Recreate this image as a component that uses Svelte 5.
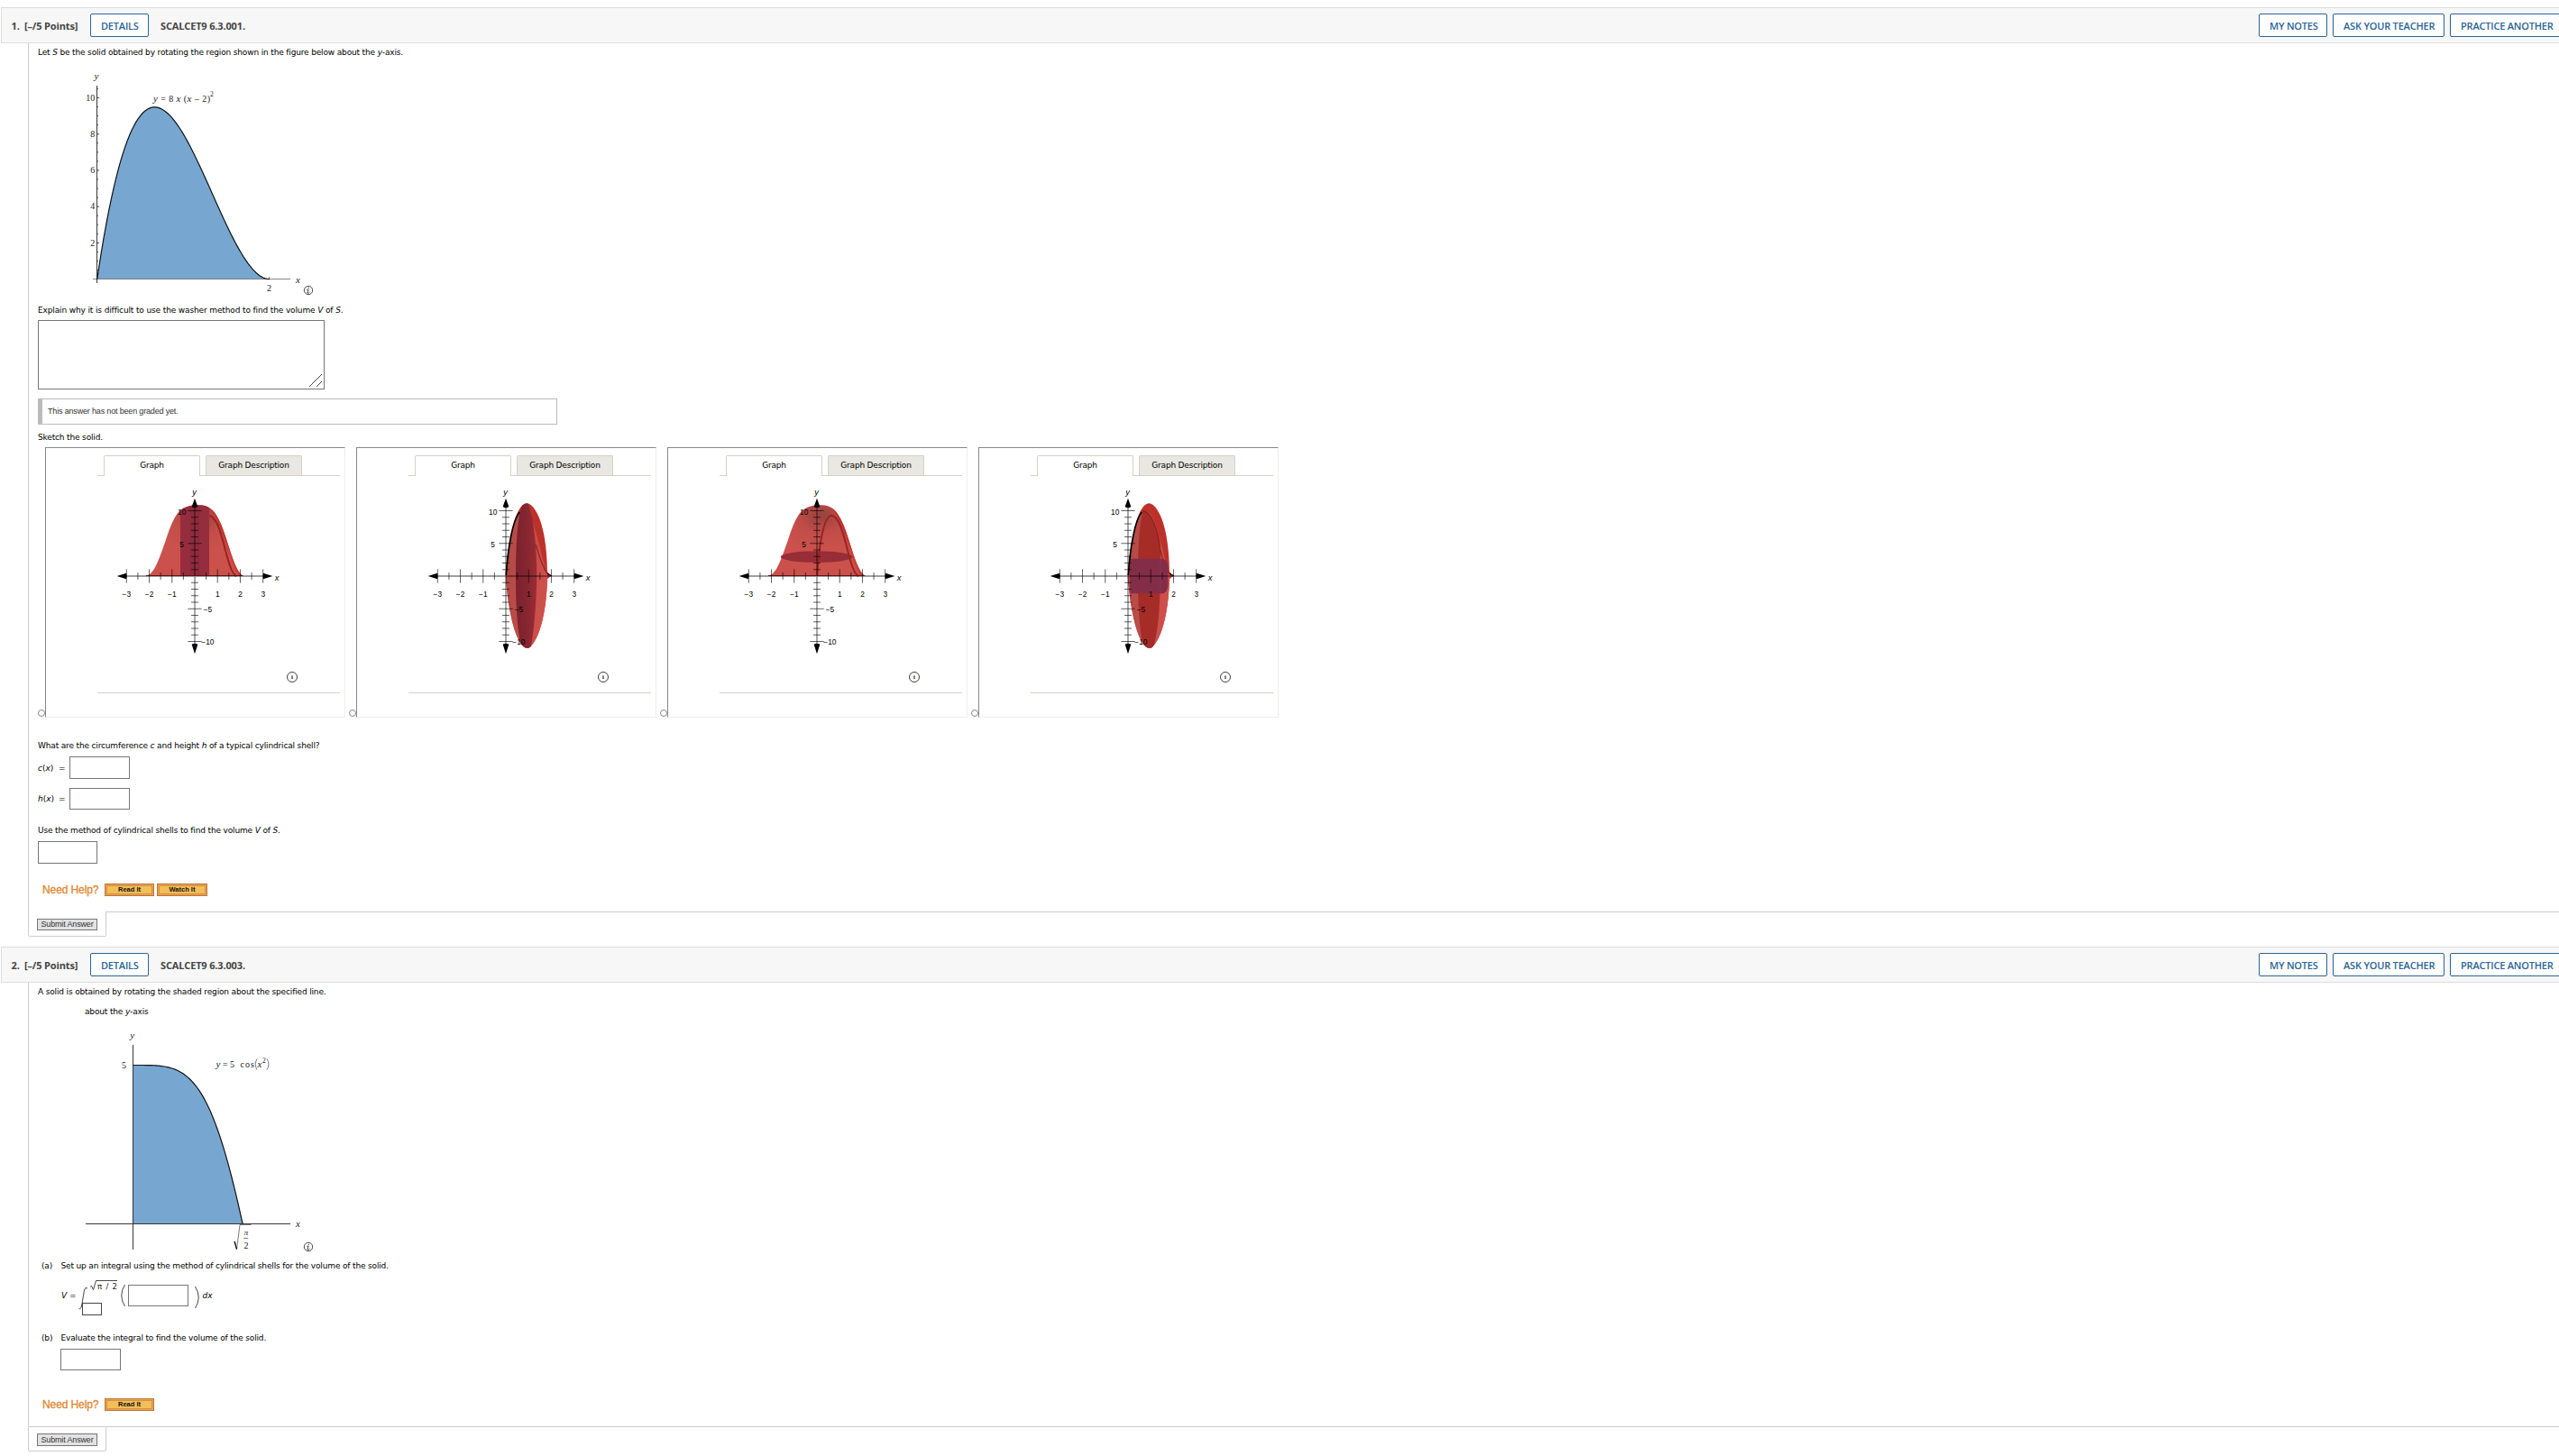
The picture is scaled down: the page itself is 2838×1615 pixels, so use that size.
<script>
	const actions = ['MY NOTES', 'ASK YOUR TEACHER', 'PRACTICE ANOTHER'];
	const solids = ['bell-column', 'lens-shell', 'bell-disc', 'lens-band'];

	// axes of the small solid plots, three units per pixel
	const origin = { x: 528, y: 477 };
	const xUnit = 75.7;
	const yUnit = 21.75;
	const xTicks = [-3, -2.5, -2, -1.5, -1, -0.5, 0.5, 1, 1.5, 2, 2.5, 3];
	const yTicks = [-10, -9, -8, -7, -6, -5, -4, -3, -2, -1, 1, 2, 3, 4, 5, 6, 7, 8, 9, 10];

	const bell =
		'M366 476 C395 471 410 415 430 362 C448 307 464 263 490 251 C512 239 548 238 568 245 C592 256 602 275 617 308 C642 370 658 456 688 476 Z';
	const lens =
		'M527 477 C536 370 556 262 584 241 Q597 229 612 241 C650 275 665 370 666 466 L680 476 L666 486 C663 590 643 682 609 713 Q598 721 586 711 C554 680 535 578 527 477 Z';

	function plot(fn, from, to, x0, y0, sx, sy) {
		const points = [];
		for (let i = 0; i <= 80; i++) {
			const x = from + ((to - from) * i) / 80;
			points.push(`${(x0 + x * sx).toFixed(2)},${(y0 - fn(x) * sy).toFixed(2)}`);
		}
		return points.join(' ');
	}

	const cubic = plot((x) => 8 * x * (x - 2) ** 2, 0, 2, 107.7, 309.7, 95.6, 20.13);
	const cosine = plot((x) => 5 * Math.cos(x * x), 0, Math.sqrt(Math.PI / 2), 147.4, 1357.5, 97.1, 35.2);
	const cubicTicks = Array.from({ length: 21 }, (_, i) => (i + 1) / 2);
</script>

{#snippet header(number, code)}
	<header class="bar">
		<span class="points">{number}.&ensp;[–/5 Points]</span>
		<button class="btn details">DETAILS</button>
		<span class="code">{code}</span>
		<nav class="actions">
			{#each actions as action}
				<button class="btn">{action}</button>
			{/each}
		</nav>
	</header>
{/snippet}

{#snippet help(buttons)}
	<div class="help">
		<span class="help-title">Need Help?</span>
		{#each buttons as label}
			<button class="help-btn">{label}</button>
		{/each}
	</div>
{/snippet}

{#snippet info(cx, cy)}
	<g class="info">
		<circle {cx} {cy} r="4.7" />
		<path d="M{cx - 1.8} {cy - 0.8}h2l-1.4 3.8q1.4 1 2.8 -1M{cx + 0.4} {cy - 3.2}v1.2" />
	</g>
{/snippet}

{#snippet submit()}
	<footer class="submit">
		<div class="submit-box"><button class="submit-btn">Submit Answer</button></div>
		<div class="submit-rule"></div>
	</footer>
{/snippet}

{#snippet solid(kind)}
	<svg class="solid" width="269" height="237" viewBox="204 150 807 711">
		<defs>
			<clipPath id="{kind}-bell"><path d={bell} /></clipPath>
			<clipPath id="{kind}-lens"><path d={lens} /></clipPath>
			<linearGradient id="{kind}-shade" x1="0" y1="0" x2="1" y2="0.25">
				<stop offset="0" stop-color="#ae4946" />
				<stop offset="1" stop-color="#cf504b" />
			</linearGradient>
			<radialGradient id="{kind}-dim" cx="0.55" cy="0.15" r="0.5">
				<stop offset="0" stop-color="#96423f" />
				<stop offset="0.5" stop-color="#c24d48" />
				<stop offset="1" stop-color="#cb514c" />
			</radialGradient>
			<linearGradient id="{kind}-core" x1="0" y1="0" x2="1" y2="0">
				<stop offset="0" stop-color="#7a222e" />
				<stop offset="0.5" stop-color="#842630" />
				<stop offset="1" stop-color="#9c2b33" />
			</linearGradient>
		</defs>
		{#if kind.startsWith('bell')}
			<path d={bell} fill="url(#{kind}-dim)" />
			<g clip-path="url(#{kind}-bell)">
				<path d="M576 240 C604 260 640 360 660 430 Q672 465 688 476" fill="none" stroke="#bd342d" stroke-width="15" />
				<path d="M584 268 C610 300 640 395 654 430 Q664 460 684 476" fill="none" stroke="#cb4540" stroke-width="5" />
				{#if kind === 'bell-column'}
					<rect x="480" y="230" width="96" height="246" fill="#962d3e" />
					<rect x="510" y="250" width="36" height="226" fill="#862a3c" opacity="0.5" />
				{/if}
			</g>
			{#if kind === 'bell-column'}
				<path class="rim" d="M577 275 C602 280 618 345 632 398 Q650 470 666 477" />
			{:else}
				<ellipse cx="527" cy="413" rx="120" ry="19" fill="#962d37" />
				<path class="rim" d="M529 475 C532 400 548 275 577 275 C602 277 618 345 632 398 Q650 470 666 477" />
			{/if}
			<path d="M366 475.500H688" stroke="#9b1f1c" stroke-width="3" />
		{:else}
			<path d={lens} fill="#bd312a" />
			<g clip-path="url(#{kind}-lens)">
				<path d="M527 476 C536 370 556 262 590 262 C625 270 640 400 668 476 L668 730 H527 Z" fill="url(#{kind}-shade)" />
				{#if kind === 'lens-shell'}
					<path
						d="M561 477 C561 360 568 250 590 228 H600 C622 290 630 370 631 477 C629 570 622 665 608 730 H582 C566 660 561 580 561 477 Z"
						fill="url(#{kind}-core)"
					/>
					<path d="M628 372 Q648 445 668 472" fill="none" stroke="#962620" stroke-width="4" />
				{:else}
					<path
						d="M561 477 C561 380 566 290 580 258 C608 262 632 330 636 380 C637 570 630 660 608 730 H582 C566 660 561 580 561 477 Z"
						fill="#a62c27"
					/>
					<path d="M575 260 C607 262 628 325 634 385 Q648 445 668 472" fill="none" stroke="#8e2620" stroke-width="4" />
					<path d="M532 419 H645 Q661 425 661 450 V505 Q660 530 645 535 H535 Z" fill="#842d49" />
					<path d="M636 420 V534" stroke="#933450" stroke-width="3" />
				{/if}
			</g>
			<path d="M529 474 C534 390 550 290 574 264" fill="none" stroke="#000" stroke-width="5" />
			<path d="M666 466 Q672 474 680 476" fill="none" stroke="#300" stroke-width="4" />
		{/if}
		<path class="axis" d="M290 477H766M528 240V712" />
		<path class="tip" d="M269 477L300 467Q303 477 300 487ZM787 477L756 467Q753 477 756 487ZM528 218L518 246Q528 254 538 246ZM528 736L518 704Q528 699 538 704Z" />
		{#each xTicks as t}
			{@const half = Number.isInteger(t) ? 23 : 12}
			<path class="tick" d="M{origin.x + t * xUnit} {origin.y - half}v{half * 2}" />
		{/each}
		{#each yTicks as t}
			{@const half = t % 5 === 0 ? 23 : 12}
			<path class="tick" d="M{origin.x - half} {origin.y - t * yUnit}h{half * 2}" />
		{/each}
		<text class="var" x="520" y="208">y</text>
		<text class="var" x="794" y="491">x</text>
		{#each [-3, -2, -1, 1, 2, 3] as n}
			<text x={origin.x + n * xUnit} y="546" text-anchor="middle">{n < 0 ? '−' + -n : n}</text>
		{/each}
		<text x="499" y="272" text-anchor="end">10</text>
		<text x="492" y="380" text-anchor="end">5</text>
		<text x="557" y="597">−5</text>
		<text x="550" y="706">−10</text>
		<circle class="ring" cx="852" cy="813" r="16.500" />
		<text class="ring-i" x="852" y="820" text-anchor="middle">i</text>
	</svg>
{/snippet}

<main>
	<section class="question">
		{@render header(1, 'SCALCET9 6.3.001.')}
		<div class="body">
			<p class="line">Let <i>S</i> be the solid obtained by rotating the region shown in the figure below about the <i>y</i>-axis.</p>
			<svg class="figure" width="260" height="270" viewBox="90 66 260 270">
				<polygon points="{cubic} 107.7,309.7" fill="#77a7d1" />
				<path class="thin grey" d="M103 309.500H322M298.500 307V310" />
				<path class="thin" d="M107.500 95V314" />
				{#each cubicTicks as t}
					<path class="thin" d="M107.500 {309.7 - t * 20.13}h{t % 2 === 0 ? 2.4 : 1.4}" />
				{/each}
				<polyline class="curve" points={cubic} />
				{#each [2, 4, 6, 8, 10] as n}
					<text x="105.300" y={312.8 - n * 20.13} text-anchor="end">{n}</text>
				{/each}
				<text class="it" x="104.500" y="88">y</text>
				<text class="it" x="328" y="314">x</text>
				<text x="298.500" y="323" text-anchor="middle">2</text>
				<text x="170" y="113" textLength="63"><tspan class="it">y</tspan> = 8 <tspan class="it">x</tspan> (<tspan class="it">x</tspan> – 2)</text>
				<text class="sup" x="233" y="107">2</text>
				{@render info(342, 322)}
			</svg>
			<p class="line explain">Explain why it is difficult to use the washer method to find the volume <i>V</i> of <i>S</i>.</p>
			<div class="essay">
				<svg width="16" height="16" viewBox="0 0 16 16"><path d="M1 15L15 1M9 15L15 9" /></svg>
			</div>
			<div class="notice">This answer has not been graded yet.</div>
			<p class="line sketch">Sketch the solid.</p>
			<div class="choices">
				{#each solids as kind}
					<span class="radio"></span>
					<div class="panel">
						<div class="tabs">
							<span class="tab active">Graph</span>
							<span class="tab">Graph Description</span>
						</div>
						{@render solid(kind)}
					</div>
				{/each}
			</div>
			<p class="line circ">What are the circumference <i>c</i> and height <i>h</i> of a typical cylindrical shell?</p>
			<div class="field"><span class="name"><i>c</i>(<i>x</i>)</span><span class="eq">=</span><div class="box"></div></div>
			<div class="field second"><span class="name"><i>h</i>(<i>x</i>)</span><span class="eq">=</span><div class="box short"></div></div>
			<p class="line use">Use the method of cylindrical shells to find the volume <i>V</i> of <i>S</i>.</p>
			<div class="box volume"></div>
			{@render help(['Read It', 'Watch It'])}
		</div>
		{@render submit()}
	</section>

	<section class="question second-q">
		{@render header(2, 'SCALCET9 6.3.003.')}
		<div class="body">
			<p class="line">A solid is obtained by rotating the shaded region about the specified line.</p>
			<p class="line about">about the <i>y</i>-axis</p>
			<svg class="figure two" width="260" height="260" viewBox="90 1136 260 260">
				<polygon points="{cosine} 147.4,1357.5" fill="#77a7d1" />
				<path class="thin" d="M147.500 1159V1386M95 1357.500H322" />
				<polyline class="curve" points={cosine} />
				<text class="it" x="144.300" y="1152">y</text>
				<text class="it" x="328" y="1361">x</text>
				<text x="137.500" y="1185" text-anchor="middle">5</text>
				<text x="239.500" y="1184"><tspan class="it">y</tspan> = 5</text>
				<text x="266.500" y="1184" textLength="15.500">cos</text>
				<text class="it" x="285.500" y="1184">x</text>
				<text class="sup" x="291" y="1178.500">2</text>
				<path class="paren" d="M285 1174.500Q281.500 1180.500 285 1186.500M296 1174.500Q300 1180.500 296 1186.500" />
				<path class="paren" d="M259 1378L260.500 1377L262.500 1386L266 1358.500H278.500M270.200 1373.500H275.200" />
				<path class="curve" d="M260.200 1377.500L262.500 1385.500" />
				<text class="it small" x="273" y="1369.500" text-anchor="middle">π</text>
				<text x="273" y="1385" text-anchor="middle">2</text>
				{@render info(342, 1383)}
			</svg>
			<p class="line part"><span class="letter">(a)</span>Set up an integral using the method of cylindrical shells for the volume of the solid.</p>
			<div class="formula">
				<span class="vol"><i>V</i> =</span>
				<svg class="integral" width="52" height="42" viewBox="86 1418 52 42">
					<path d="M87.500 1451.500Q90 1453 91 1446L93.500 1431Q94.500 1427 97 1429" />
					<path d="M100 1427.500L101.500 1426.500L103.500 1430.500L106.500 1420.500H130" />
					<text x="108" y="1430" textLength="22">π / 2</text>
					<rect x="91.500" y="1445.500" width="21" height="13" />
				</svg>
				<svg class="bracket" width="5" height="26" viewBox="0 0 5 26"><path d="M4.500 1Q-3 13 4.500 25" /></svg>
				<div class="box short"></div>
				<svg class="bracket right" width="5" height="26" viewBox="0 0 5 26"><path d="M.5 1Q8 13 .5 25" /></svg>
				<i class="dx">dx</i>
			</div>
			<p class="line part b"><span class="letter">(b)</span>Evaluate the integral to find the volume of the solid.</p>
			<div class="box short answer"></div>
			{@render help(['Read It'])}
		</div>
		{@render submit()}
	</section>
</main>

<style>
	:global(body) {
		background: #fff;
	}

	main {
		width: 2838px;
		height: 1615px;
		overflow: hidden;
		box-sizing: border-box;
		padding-top: 8px;
		color: #000;
		font-family: 'DejaVu Sans', Verdana, sans-serif;
		font-size: 9px;
	}

	button {
		margin: 0;
		padding: 0;
	}

	.bar {
		display: flex;
		align-items: center;
		box-sizing: border-box;
		width: 2860px;
		height: 40px;
		margin-left: 1px;
		padding: 0 17px 0 10.5px;
		background: #f7f7f7;
		border: 1px solid #ddd;
		font-family: 'Open Sans', sans-serif;
		color: #444;
	}

	.points,
	.code {
		font-size: 11px;
		font-weight: 700;
		letter-spacing: -0.15px;
		white-space: nowrap;
	}

	.points {
		width: 87.5px;
	}

	.code {
		margin-left: 13px;
	}

	.btn {
		box-sizing: border-box;
		height: 26px;
		padding: 0 11px;
		background: #fff;
		border: 1px solid #2a6496;
		border-radius: 2px;
		color: #2a6496;
		font: 600 11px 'Open Sans', sans-serif;
		letter-spacing: -0.2px;
		white-space: nowrap;
	}

	.details {
		width: 65px;
	}

	.actions {
		display: flex;
		gap: 6px;
		margin-left: auto;
	}

	.actions .btn:nth-child(1) {
		width: 76px;
	}

	.actions .btn:nth-child(2) {
		width: 124px;
	}

	.actions .btn:nth-child(3) {
		width: 126px;
	}

	.body {
		margin-left: 31px;
		padding: 2px 0 0 10px;
		border-left: 1px solid #ccc;
	}

	.line {
		width: max-content;
		height: 16px;
		margin: 0;
		letter-spacing: -0.155px;
		line-height: 16px;
		white-space: nowrap;
	}

	.explain {
		letter-spacing: -0.13px;
	}

	.figure {
		display: block;
		margin-left: 48px;
		font-family: 'Liberation Serif', serif;
		font-size: 10px;
	}

	.figure text {
		fill: #222;
	}

	.it {
		font-size: 11px;
		font-style: italic;
	}

	.sup {
		font-size: 7.5px;
	}

	.small {
		font-size: 9px;
	}

	.curve {
		fill: none;
		stroke: #111;
		stroke-width: 1.2;
	}

	.thin {
		stroke: #222;
		stroke-width: 0.9;
	}

	.grey {
		stroke: #777;
	}

	.paren {
		fill: none;
		stroke: #444;
		stroke-width: 0.7;
	}

	.info {
		fill: none;
		stroke: #333;
		stroke-width: 0.9;
	}

	.essay {
		display: flex;
		justify-content: flex-end;
		align-items: flex-end;
		box-sizing: border-box;
		width: 318px;
		height: 77px;
		margin-top: 3px;
		padding: 1px;
		border: 1px solid #767676;
	}

	.essay path {
		stroke: #444;
	}

	.notice {
		box-sizing: border-box;
		width: 576px;
		height: 29px;
		margin-top: 10px;
		padding-left: 6px;
		border: 1px solid #bbb;
		border-left-width: 5px;
		color: #333;
		font: 9px/27px 'Liberation Sans', Arial, sans-serif;
		letter-spacing: -0.17px;
	}

	.sketch {
		margin-top: 6px;
	}

	.choices {
		display: flex;
		align-items: flex-end;
		margin-top: 3px;
	}

	.radio {
		box-sizing: border-box;
		width: 8px;
		height: 8px;
		margin-bottom: 1px;
		border: 1px solid #888;
		border-radius: 50%;
	}

	.radio:not(:first-child) {
		margin-left: 4px;
	}

	.panel {
		box-sizing: border-box;
		width: 333px;
		height: 300px;
		padding: 8px 5px 0 57px;
		border: 1px solid #eee;
		border-top-color: #888;
		border-left-color: #888;
	}

	.tabs {
		display: flex;
		gap: 6px;
		box-sizing: border-box;
		height: 23px;
		padding-left: 7px;
		border-bottom: 1px solid #d3d1c7;
	}

	.tab {
		box-sizing: border-box;
		width: 107px;
		height: 22px;
		background: #e8e7e1;
		border: 1px solid #d3d1c7;
		border-bottom: 0;
		border-radius: 2px 2px 0 0;
		color: #000;
		letter-spacing: -0.2px;
		line-height: 20px;
		text-align: center;
	}

	.tab.active {
		height: 23px;
		background: #fff;
	}

	.solid {
		display: block;
		padding: 2px 0 1px;
		border-bottom: 1px solid #d3d1c7;
		font-family: 'Liberation Sans', Arial, sans-serif;
		font-size: 25px;
	}

	.axis {
		stroke: #000;
		stroke-opacity: 0.5;
		stroke-width: 4;
	}

	.tick {
		stroke: #000;
		stroke-opacity: 0.85;
		stroke-width: 2.2;
	}

	.tip {
		fill: #000;
	}

	.rim {
		fill: none;
		stroke: #99241f;
		stroke-width: 6;
	}

	.var {
		font-size: 28px;
		font-style: italic;
	}

	.ring {
		fill: none;
		stroke: #222;
		stroke-width: 2.6;
	}

	.ring-i {
		font: 700 20px 'Liberation Serif', serif;
	}

	.circ {
		margin-top: 23px;
	}

	.box {
		box-sizing: border-box;
		width: 67px;
		height: 25px;
		border: 1px solid #767676;
	}

	.box.short {
		height: 24px;
	}

	.field {
		display: flex;
		align-items: center;
		margin-top: 4px;
	}

	.field.second {
		margin-top: 10px;
	}

	.name {
		width: 23px;
	}

	.eq {
		width: 12px;
	}

	.use {
		margin-top: 15px;
	}

	.volume {
		width: 66px;
		margin-top: 4px;
	}

	.help {
		display: flex;
		align-items: center;
		height: 14px;
		margin-top: 22px;
		padding-left: 5px;
	}

	.help-title {
		width: 69px;
		color: #e0852c;
		font: 12px/14px 'Liberation Sans', Arial, sans-serif;
		letter-spacing: -0.1px;
		-webkit-text-stroke: 0.3px #e0852c;
		white-space: nowrap;
	}

	.help-btn {
		box-sizing: border-box;
		width: 55px;
		height: 14px;
		margin-right: 3px;
		background: #f3bd58;
		border: 1px solid #b9763a;
		box-shadow: inset 0 0 0 1px #f0a04b, inset 0 0 0 2px #cf9444;
		color: #111;
		font: 700 7.5px/12px 'Liberation Sans', Arial, sans-serif;
	}

	.help-btn + .help-btn {
		width: 56px;
	}

	.submit {
		display: flex;
		height: 28px;
		margin-left: 31px;
	}

	.submit-box {
		box-sizing: border-box;
		width: 87px;
		padding: 8px 0 0 9px;
		border: 1px solid #ccc;
		border-top: 0;
		border-radius: 0 0 2px 2px;
	}

	.submit-rule {
		flex: 1;
		border-top: 1px solid #ccc;
	}

	.submit-btn {
		display: block;
		box-sizing: border-box;
		width: 67px;
		height: 13px;
		background: #e2e2e4;
		border: 1px solid #767676;
		color: #333;
		font: 9px/11px 'Liberation Sans', Arial, sans-serif;
		letter-spacing: -0.15px;
	}

	.question {
		height: 1042px;
	}

	.question .body {
		height: 963px;
		box-sizing: border-box;
	}

	.second-q .body {
		height: 492px;
	}

	.second-q .submit-box {
		padding-top: 7px;
		border-top: 1px solid #ccc;
	}

	.second-q .submit-btn {
		height: 14px;
	}

	.about {
		margin: 6px 0 0 52px;
	}

	.figure.two {
		margin-top: 6px;
	}

	.part {
		padding-left: 4px;
	}

	.letter {
		display: inline-block;
		width: 21.5px;
	}

	.formula {
		display: flex;
		align-items: center;
		height: 42px;
		margin-top: 6px;
		padding-left: 26px;
	}

	.formula > :not(.integral) {
		margin-bottom: 4px;
	}

	.vol {
		width: 18px;
	}

	.integral {
		fill: none;
		stroke: #333;
		stroke-width: 0.9;
	}

	.integral text {
		fill: #222;
		stroke: none;
		font-size: 8.5px;
	}

	.bracket {
		margin: 0 3px 0 -4px;
		fill: none;
		stroke: #333;
		stroke-width: 0.9;
	}

	.bracket.right {
		margin: 0 4px 0 6.5px;
	}

	.b {
		margin-top: 16px;
	}

	.answer {
		margin: 4px 0 0 25px;
	}

	.second-q .help {
		margin-top: 31px;
	}
</style>
